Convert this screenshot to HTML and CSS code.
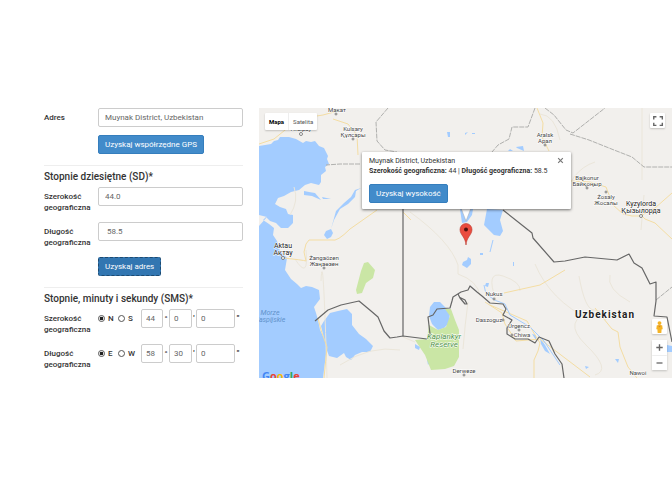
FILE: index.html
```html
<!DOCTYPE html>
<html lang="pl">
<head>
<meta charset="utf-8">
<meta name="viewport" content="width=device-width, initial-scale=1">
<title>Współrzędne GPS</title>
<link rel="stylesheet" href="styles.css">
</head>
<body>
<main class="page">
  <form class="form">
    <section class="group">
      <div class="row">
        <label class="label" for="address">Adres</label>
        <input class="field" id="address" type="text" value="Muynak District, Uzbekistan">
      </div>
      <div class="row"><button class="btn" type="button">Uzyskaj współrzędne GPS</button></div>
    </section>
    <section class="group">
      <h2 class="title">Stopnie dziesiętne (SD)*</h2>
      <div class="row">
        <label class="label" for="lat">Szerokość geograficzna</label>
        <input class="field" id="lat" type="text" value="44.0">
      </div>
      <div class="row">
        <label class="label" for="lng">Długość geograficzna</label>
        <input class="field" id="lng" type="text" value=" 58.5">
      </div>
      <div class="row"><button class="btn btn-active" type="button">Uzyskaj adres</button></div>
    </section>
    <section class="group">
      <h2 class="title">Stopnie, minuty i sekundy (SMS)*</h2>
      <div class="row">
        <label class="label" for="lat-deg">Szerokość geograficzna</label>
        <div class="dms">
          <label class="radio"><input type="radio" name="ns" checked><span>N</span></label>
          <label class="radio"><input type="radio" name="ns"><span>S</span></label>
          <input class="field part" id="lat-deg" type="text" value="44"><span class="unit">°</span>
          <input class="field part" type="text" value="0" aria-label="Minuty szerokości"><span class="unit">'</span>
          <input class="field part seconds" type="text" value="0" aria-label="Sekundy szerokości"><span class="unit">"</span>
        </div>
      </div>
      <div class="row">
        <label class="label" for="lng-deg">Długość geograficzna</label>
        <div class="dms">
          <label class="radio"><input type="radio" name="ew" checked><span>E</span></label>
          <label class="radio"><input type="radio" name="ew"><span>W</span></label>
          <input class="field part" id="lng-deg" type="text" value="58"><span class="unit">°</span>
          <input class="field part" type="text" value="30" aria-label="Minuty długości"><span class="unit">'</span>
          <input class="field part seconds" type="text" value="0" aria-label="Sekundy długości"><span class="unit">"</span>
        </div>
      </div>
    </section>
  </form>

  <section class="map" aria-label="Mapa">
    <svg class="terrain" viewBox="259 108 413 270" preserveAspectRatio="xMidYMid slice">
      <g class="water">
        <path d="M259 146L265 145 271 144 274 141 278 140 280 137 289 137 296 139 303 143 306 141 311 142 315 141 319 146 324 148 328 156 327 159 329 164 325 167 326 171 321 175 321 182 319 185 311 183 305 185 299 190 291 192 284 196 278 198 275 204 280 207 286 209 288 214 293 215 293 223 288 228 281 228 276 223 270 221 266 217 263 220 269 224 274 228 273 235 277 241 280 251 287 258 285 270 291 279 297 284 301 288 306 286 312 287 319 290 320 299 314 307 316 313 318 320 320 330 324 338 327 347 325 362 323 378 259 378 259 226 267 217 259 215Z"/>
        <path d="M321 326L324 321 330 313 338 311 347 309 352 314 352 325 359 334 366 339 373 346 370 352 362 352 355 355 351 360 346 357 344 353 337 358 329 356 325 345 323 334Z"/>
        <path d="M361 188L356 191 355 197 348 204 340 209 334 220 331 229 333 233 331 237 327 239 324 235 326 231 331 229 336 211 344 203 351 197 355 190Z"/>
        <path d="M304 191L309 192 315 193 321 200 312 196 304 195ZM322 197L331 199 323 199Z"/>
        <path d="M460 209L473 209 472 215 467 222 462 223ZM487 209L503 210 500 220 503 231 500 236 494 235 484 225ZM463 262L467 260 468 257 471 259 471 264 467 268 462 265ZM486 283L489 283 488 287 485 286Z"/>
        <path d="M429 316L430 307 434 302 440 302 446 308 450 312 449 323 444 328 438 330 432 324ZM415 344L420 347 419 350 415 348ZM427 359L430 362 428 365Z"/>
        <path d="M447 132h3v5h-2ZM465 133l3-1-3 3ZM472 133h3v1h-3ZM508 151l2-2 3 2ZM516 147l7-1 1 5-7-3ZM480 253h3v2h-3ZM513 262h1v4h-1ZM615 359h4l-1 4ZM585 366l4 1-3 2ZM667 345l5 1v6h-5ZM540 338l5 7 5 9-5-3-4-7ZM532 334l4 1v5ZM259 365l2-1 1 4-3 1Z"/>
      </g>
      <g class="park">
        <path d="M364 263L368 262 375 270 373 278 366 283 362 293 357 294 356 290 361 271Z"/>
        <path d="M429 325L438 330 446 327 450 316 445 309 451 309 455 320 459 330 459 357 454 366 445 369 431 370 425 355 415 340 427 339Z"/>
      </g>
      <g class="road minor">
        <path d="M290 215Q299 201 294 187M295 259Q309 281 306 250M321 281Q323 240 327 378M410 212Q450 241 458 265L458 274Q478 281 480 296M496 300Q485 270 503 276T520 291M468 302Q465 324 463 349M403 337L415 342M340 365Q370 345 400 350M535 264Q550 300 590 320M579 276Q585 310 594 310T606 320M610 275Q606 289 630 302M594 310Q560 320 586 345T595 375M642 108V180M641 230L644 195M540 114Q555 115 560 140M562 205Q570 170 595 162"/>
      </g>
      <g class="road">
        <path d="M259 144L274 139 290 126 304 118 323 115 345 109M283 258Q303 260 306 261L304 252 306 244 309 240 332 240Q337 242 350 229L377 210M333 119L348 124 357 135 358 155M403 212L411 220M537 108L543 123 542 137 549 151M571 181L590 182 606 187 613 205 623 214 632 216 642 216 645 219 655 223 672 239M642 215L655 208 672 193M485 302L502 313 505 324 516 341 540 339 561 355 590 377M490 305L527 321 535 335 540 343 538 351 534 360 534 378M504 293L540 285 565 270M595 308L612 329 618 332 620 347 628 367 637 378"/>
      </g>
      <path class="road" d="M318 318L321 330 327 347 324 378"/>
      <g class="river"><path d="M484 285Q484 298 505 304L510 315 530 327 544 341 560 365M493 240L490 252"/></g>
      <g class="border dashed">
        <path d="M388 108L376 122 377 141 385 150 397 152M360 164L340 164 326 165M535 108L528 127 512 127 509 139 498 145 492 152M545 108L554 115 566 130 573 133 605 108M570 134L589 140 614 150 632 157 644 167 672 167"/>
        <path d="M656 300L672 287"/>
      </g>
      <g class="border">
        <path d="M315 321L328 310 341 305 359 301 371 311 378 317 384 331 390 338 397 337 403 336 427 339 430 334 428 317 433 315 437 309 450 308 452 301 453 297 461 292 468 290 470 286 477 292 482 296 490 303 503 304 506 309 503 315 512 320 507 328 507 334 515 339 528 339 535 343 539 337 549 341 555 354 562 364 564 378"/>
        <path d="M458 294L460 298 465 304 467 304 465 300 459 297"/>
        <path d="M403 209V336M503 210L532 233 533 238 554 262 565 261 585 257 617 260 629 254 634 263 642 268 650 284 656 282 656 301 654 316 667 317 672 342"/>
      </g>
      <g class="places">
        <text x="337" y="112">Макат</text><text x="301" y="131">Атырау</text>
        <text x="353" y="131">Kulsary</text><text x="353" y="137">Құлсары</text>
        <text x="545" y="137">Aralsk</text><text x="545" y="143">Арал</text>
        <text x="587" y="180">Bajkonur</text><text x="587" y="186">Байқоңыр</text>
        <text x="606" y="199">Żosaly</text><text x="606" y="205">Жосалы</text>
        <text x="324" y="260">Żangaözen</text><text x="324" y="266">Жаңаөзен</text>
        <text x="494" y="296">Nukus</text><text x="489" y="322">Daszoguz</text>
        <text x="519" y="328">Urgencz</text><text x="522" y="337">Chiwa</text>
        <text x="464" y="373">Derweze</text><text x="638" y="375">Nawoi</text>
        <g class="city"><text x="283" y="248">Aktau</text><text x="283" y="255">Ақтау</text><text x="641" y="206">Kyzylorda</text><text x="641" y="213">Қызылорда</text></g>
      </g>
      <g class="dots">
        <circle cx="336" cy="114" r="1"/><circle cx="301" cy="134" r="1.5"/><circle cx="353" cy="139" r="1"/><circle cx="545" cy="145" r="1"/><circle cx="587" cy="188" r="1"/><circle cx="606" cy="192" r="1"/><circle cx="641" cy="216" r="1.5"/><circle cx="283" cy="258" r="1.5"/><circle cx="324" cy="268" r="1"/><circle cx="494" cy="299" r="1"/><circle cx="503" cy="320" r="1"/><circle cx="519" cy="330" r="1"/><circle cx="512" cy="335" r="1"/><circle cx="464" cy="375" r="1"/>
      </g>
      <g class="sea"><text x="270" y="315">Morze</text><text x="270" y="322">Kaspijskie</text></g>
      <g class="reserve"><text x="444" y="339">Kaplankyr</text><text x="444" y="347">Reserve</text></g>
      <text class="country" x="605" y="318">Uzbekistan</text>
      <text class="logo" x="262" y="380"><tspan class="blue">G</tspan><tspan class="red">o</tspan><tspan class="yellow">o</tspan><tspan class="blue">g</tspan><tspan class="green">l</tspan><tspan class="red">e</tspan></text>
      <path class="tail" d="M461 208L466 221 471 208Z"/>
      <path class="pin" d="M466 245C465.500 237 460 235 460 229.500A6 6 0 0 1 472 229.500C472 235 466.500 237 466 245Z"/>
      <circle class="pin-dot" cx="466" cy="229.500" r="2"/>
    </svg>

    <div class="types">
      <button class="type selected" type="button">Mapa</button>
      <button class="type" type="button">Satelita</button>
    </div>
    <button class="control fullscreen" type="button" aria-label="Pełny ekran">
      <svg viewBox="0 0 14 14"><path d="M3.500 6V3.500H6M9 3.500h2.500V6M11.500 9v2.500H9M6 11.500H3.500V9"/></svg>
    </button>
    <aside class="info">
      <button class="close" type="button" aria-label="Zamknij"><svg viewBox="0 0 6 6"><path d="M1 1L5 5M5 1L1 5"/></svg></button>
      <p>Muynak District, Uzbekistan</p>
      <p><b>Szerokość geograficzna:</b> 44 | <b>Długość geograficzna:</b> 58.5</p>
      <button class="btn" type="button">Uzyskaj wysokość</button>
    </aside>
    <div class="tools">
      <button class="control" type="button" aria-label="Street View">
        <svg class="pegman" viewBox="0 0 14 14"><circle cx="7" cy="3.800" r="1.800"/><path d="M4.500 5.800h5l.5 3.700H9L8.700 13H5.300L5 9.500H4Z"/><path class="shade" d="M5.500 6h3L7 8Z"/></svg>
      </button>
      <div class="zoom">
        <button class="control" type="button" aria-label="Powiększ"><svg viewBox="0 0 14 14"><path d="M4 7h6M7 4v6"/></svg></button>
        <button class="control" type="button" aria-label="Pomniejsz"><svg viewBox="0 0 14 14"><path d="M4 7h6"/></svg></button>
      </div>
    </div>
  </section>
</main>
</body>
</html>
```
FILE: styles.css
```css
* { box-sizing: border-box; }
body { margin: 0; background: #fff; color: #333; font: 8px/11px Roboto, sans-serif; }
button, input { font: inherit; color: inherit; }
p { margin: 0; }

.page {
  display: grid;
  grid-template-columns: 199fr 413fr;
  gap: 16px;
  align-items: start;
  padding: 108px 0 0 44px;
}

.group + .group { margin-top: 11px; padding-top: 5px; border-top: 1px solid #eee; }
.title { margin: 0 0 4px; font-size: 10px; font-weight: 500; line-height: 12px; white-space: nowrap; }
.row { display: grid; grid-template-columns: 54px 1fr; align-items: start; }
.row + .row { margin-top: 8px; }
.label { padding: 4px 0 1px; font-weight: 500; }
.row > .btn { grid-column: 2; justify-self: start; }
.field {
  width: 100%;
  min-width: 0;
  height: 19px;
  padding: 0 6px;
  border: 1px solid #ccc;
  border-radius: 2px;
  background: #fff;
  color: #666;
}
.btn {
  height: 19px;
  padding: 0 6px;
  border: 1px solid #357ebd;
  border-radius: 2px;
  background: #428bca;
  color: #fff;
  font-size: 8px;
  white-space: nowrap;
}
.btn-active { border: 1px dashed #1d4a70; background: #3276b1; }

.dms { display: grid; grid-template-columns: 20px 23px 22px 6px 23px 4px 39px 6px; align-items: center; }
.radio { display: flex; align-items: center; gap: 3px; font-weight: 500; }
.radio input {
  appearance: none;
  width: 7px;
  height: 7px;
  margin: 0;
  border: 1px solid #555;
  border-radius: 50%;
  background: #fff;
}
.radio input:checked { background: radial-gradient(#222 0 1px, #222 40%, #fff 60%); }
.part { padding: 0 4px; }
.unit { align-self: start; padding-top: 4px; text-align: center; font-weight: 700; }

.map { position: relative; aspect-ratio: 413 / 270; overflow: hidden; background: #f2f0ed; }
.terrain { display: block; width: 100%; height: 100%; fill: none; }
.water { fill: #a3ccff; }
.park { fill: #cae6a5; }
.road { stroke: #f4dda3; stroke-width: 1; }
.minor { stroke: #ebe6da; }
.river { stroke: #a3ccff; stroke-width: 1; }
.border { stroke: #666; stroke-width: 1.2; stroke-linejoin: round; }
.dashed { stroke: #b0b0ae; stroke-width: 1; stroke-dasharray: 5 1; }
.places { fill: #444; font-size: 6px; text-anchor: middle; paint-order: stroke; stroke: #fff; stroke-width: 1; }
.city { font-size: 7px; fill: #222; }
.dots { fill: #fff; stroke: #555; stroke-width: 0.7; }
.sea { fill: #6192cb; font-size: 7px; font-style: italic; text-anchor: middle; }
.reserve { fill: #4c913f; font-size: 8px; font-style: italic; text-anchor: middle; paint-order: stroke; stroke: #fff; stroke-width: 1; }
.country { fill: #222; font-size: 10px; font-weight: 700; letter-spacing: 1px; text-anchor: middle; paint-order: stroke; stroke: #fff; stroke-width: 1; }
.logo { font: 700 11px "Open Sans", sans-serif; }
.blue { fill: #4285f4; }
.red { fill: #ea4335; }
.yellow { fill: #fbbc05; }
.green { fill: #34a853; }
.tail { fill: #fff; stroke: #aaa; stroke-width: 0.5; }
.pin { fill: #ea4c3f; stroke: #b8352b; stroke-width: 0.6; }
.pin-dot { fill: #501310; }

.types {
  position: absolute;
  top: 5px;
  left: 6px;
  display: flex;
  background: #fff;
  border-radius: 1px;
  box-shadow: 0 1px 2px #0003;
}
.type { height: 17px; padding: 0 4px; border: 0; background: none; color: #565656; font-size: 6px; }
.type + .type { border-left: 1px solid #eee; }
.type.selected { color: #000; font-weight: 700; }

.control { display: block; width: 15px; height: 15px; padding: 0; border: 0; border-radius: 1px; background: #fff; box-shadow: 0 1px 2px #0003; }
.control svg { display: block; width: 100%; height: 100%; fill: none; stroke: #666; stroke-width: 1.3; }
.control .pegman { fill: #f5b325; stroke: none; }
.pegman .shade { fill: #d98b1b; }
.fullscreen { position: absolute; top: 5px; right: 7px; }
.tools { position: absolute; right: 5px; bottom: 8px; display: grid; gap: 6px; }
.zoom { background: #fff; box-shadow: 0 1px 2px #0003; }
.zoom .control { box-shadow: none; }
.zoom .control + .control { border-top: 1px solid #eee; }

.info {
  position: absolute;
  top: 44px;
  left: 103px;
  width: 209px;
  padding: 4px 7px 6px;
  border-radius: 1px;
  background: #fff;
  box-shadow: 0 1px 3px #0008;
  font-size: 7px;
  line-height: 10px;
  white-space: nowrap;
}
.info .btn { margin-top: 8px; }
.close { position: absolute; top: 5px; right: 7px; width: 7px; height: 7px; padding: 0; border: 0; background: none; }
.close svg { display: block; width: 100%; height: 100%; stroke: #777; stroke-width: 1; }
```
